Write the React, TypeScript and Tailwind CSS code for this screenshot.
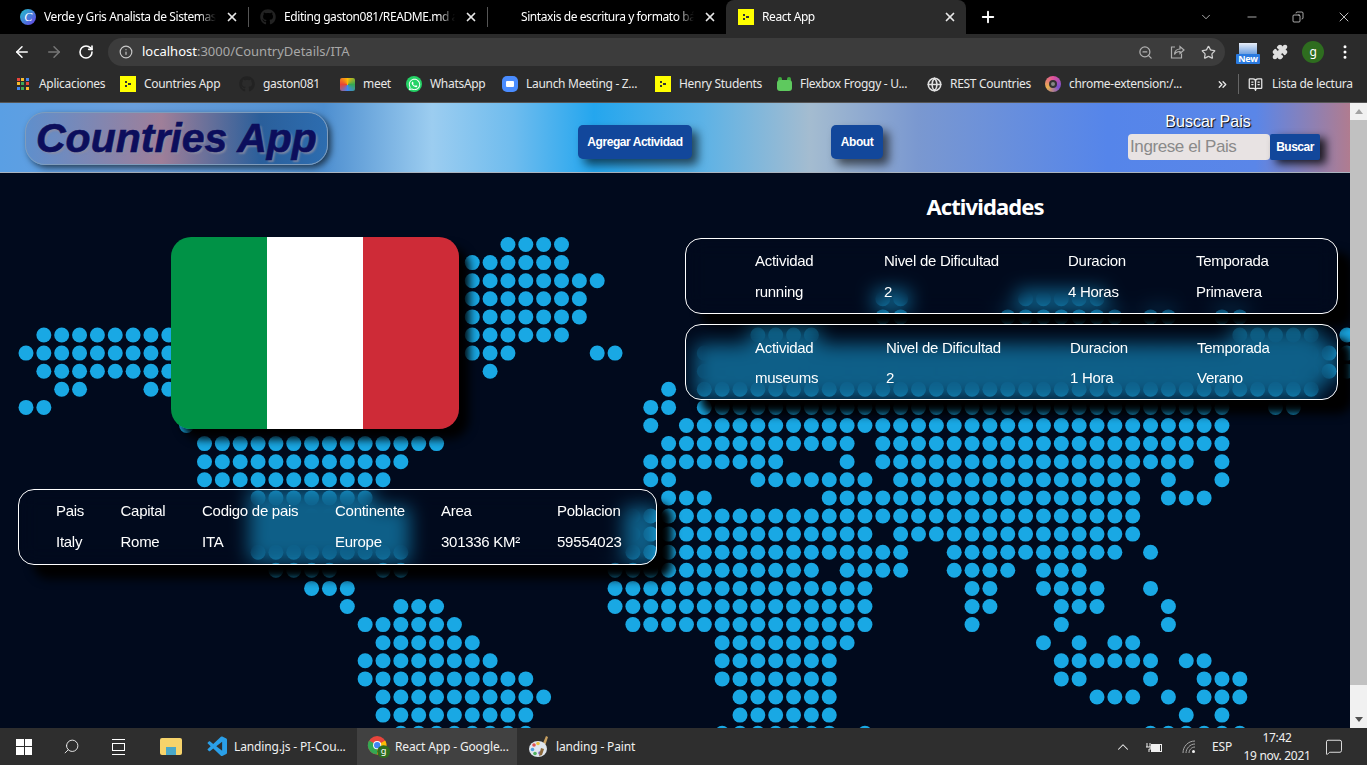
import type { ReactNode } from 'react';
import { ArrowLeft, ArrowRight, RotateCw, Info, ZoomOut, Star, Puzzle, EllipsisVertical, ChevronDown, ChevronUp, Minus, X, Plus, Search, MessageSquare, Copy, BookOpenText, ChevronsRight, Globe } from 'lucide-react';
import { FaGithub, FaWhatsapp } from 'react-icons/fa';
import { VscVscode } from 'react-icons/vsc';

// [row, [fromCol, toCol], ...] — the dots of the world map background
const DOTS: [number, ...[number, number][]][] = [
  [0, [27, 30]],
  [1, [25, 30]],
  [2, [25, 32]],
  [3, [25, 31], [48, 49], [56, 60]],
  [4, [25, 31], [48, 49], [55, 61], [63, 64], [67, 68]],
  [5, [1, 8], [25, 30], [41, 44], [68, 72], [74, 74]],
  [6, [0, 8], [25, 27], [32, 33], [38, 73], [74, 74]],
  [7, [1, 8], [26, 26], [38, 73], [74, 74]],
  [8, [2, 3], [7, 8], [36, 36], [38, 72]],
  [9, [0, 1], [35, 36], [38, 67], [70, 71]],
  [10, [9, 9], [35, 35], [37, 67]],
  [11, [10, 23], [36, 46], [48, 67]],
  [12, [10, 21], [35, 42], [46, 46], [48, 65], [67, 67]],
  [13, [10, 20], [35, 36], [41, 47], [49, 62], [64, 64], [67, 67]],
  [14, [13, 19], [36, 38], [45, 62], [64, 66]],
  [15, [13, 21], [34, 62]],
  [16, [13, 21], [34, 47], [49, 62]],
  [17, [13, 21], [34, 49], [52, 61], [63, 63]],
  [18, [14, 17], [20, 21], [33, 44], [46, 49], [52, 55], [57, 59]],
  [19, [16, 18], [33, 47], [53, 54], [57, 60], [63, 63]],
  [20, [18, 18], [21, 23], [33, 47], [53, 54], [58, 60], [64, 64]],
  [21, [19, 24], [34, 47], [53, 53], [58, 58], [64, 64]],
  [22, [20, 25], [39, 46], [57, 57], [59, 59], [61, 62]],
  [23, [19, 26], [39, 45], [58, 63], [65, 66]],
  [24, [19, 28], [39, 45], [58, 59], [63, 63], [66, 68]],
  [25, [20, 29], [40, 45], [60, 62], [64, 64], [66, 68]],
  [26, [20, 28], [40, 45], [65, 65], [67, 67]],
  [27, [21, 28], [39, 45], [47, 47], [63, 68]],
];

function DotMap() {
  const circles: ReactNode[] = [];
  for (const [row, ...ranges] of DOTS) {
    for (const [from, to] of ranges) {
      for (let c = from; c <= to; c++) {
        circles.push(<circle key={`${row}-${c}`} cx={26 + 17.85 * c} cy={71.5 + 18.1 * row} r={7.5} fill="#19a8e4" />);
      }
    }
  }
  return (
    <svg className="absolute left-0 top-0" width={1350} height={555}>
      {circles}
    </svg>
  );
}

function HenryIcon({ size = 16 }: { size?: number }) {
  return (
    <span className="flex shrink-0 items-center justify-center gap-[1px] bg-[#ffff00]" style={{ width: size, height: size }}>
      <span className="flex flex-col gap-[2px]">
        <span className="h-[2px] w-[2px] bg-[#333]" />
        <span className="h-[2px] w-[2px] bg-[#333]" />
      </span>
      <span className="h-[2px] w-[3px] bg-[#333]" />
    </span>
  );
}

function Tab({ width, icon, title, pad = 'pl-[10px]', active }: { width: string; icon?: ReactNode; title: string; pad?: string; active?: boolean }) {
  return (
    <div className={`${width} ${pad} relative flex h-full shrink-0 items-center gap-2 ${active ? 'rounded-t-lg bg-[#2b2b2b]' : ''}`}>
      {icon}
      <span className="min-w-0 flex-1 overflow-hidden whitespace-nowrap tracking-[-0.42px] text-white [mask-image:linear-gradient(to_right,black_90%,transparent)]">{title}</span>
      <X size={14} strokeWidth={3} className="ml-[1px] mr-[9px] shrink-0 text-[#e8e8e8]" />
    </div>
  );
}

function Bookmark({ icon, label, width }: { icon: ReactNode; label: string; width: string }) {
  return (
    <div className={`${width} flex shrink-0 items-center gap-2`}>
      <span className="flex w-4 shrink-0 justify-center">{icon}</span>
      <span className="whitespace-nowrap">{label}</span>
    </div>
  );
}

function AppsIcon() {
  const colors = ['#e8453c', '#f9bb2d', '#4285f4', '#f9bb2d', '#3aa757', '#e8453c', '#4285f4', '#3aa757', '#f9bb2d'];
  return (
    <span className="grid h-[13px] w-[13px] grid-cols-3 gap-[1px]">
      {colors.map((c, i) => (
        <span key={i} className="h-[3px] w-[3px]" style={{ backgroundColor: c }} />
      ))}
    </span>
  );
}

function FrogIcon() {
  return (
    <span className="relative h-[14px] w-[15px]">
      <span className="absolute left-[1px] top-0 h-[5px] w-[4px] rounded-full bg-[#3fa83f]" />
      <span className="absolute right-[1px] top-0 h-[5px] w-[4px] rounded-full bg-[#3fa83f]" />
      <span className="absolute bottom-0 left-0 h-[11px] w-[15px] rounded-[3px] bg-[#5ec95e]" />
    </span>
  );
}

function ShareIcon() {
  return (
    <svg width="16" height="16" viewBox="0 0 16 16" fill="none" stroke="#b0b0b0" strokeWidth="1.2" className="ml-[16px]">
      <path d="M6 3H2.5v11h10V9.5" />
      <path d="M5.5 10.5c0-3.5 2.5-5.5 5.5-5.5V2.5L15 6l-4 3.5V7.5c-2.5 0-4.5 1-5.5 3z" />
    </svg>
  );
}

function ChromeIcon() {
  return (
    <svg width="26" height="26" viewBox="0 0 26 26">
      <circle cx="11" cy="11" r="10" fill="#e8453c" />
      <path d="M11 11 L2.3 6 A10 10 0 0 0 11 21 Z" fill="#34a853" />
      <path d="M11 11 L19.7 6 A10 10 0 0 1 11 21 Z" fill="#fbbc05" />
      <circle cx="11" cy="11" r="4.4" fill="#fff" />
      <circle cx="11" cy="11" r="3.4" fill="#4285f4" />
      <circle cx="18" cy="18" r="7" fill="#2e6d1f" />
      <text x="18" y="21" textAnchor="middle" fontSize="10" fill="#fff" fontFamily="Noto Sans">g</text>
    </svg>
  );
}

function PaintIcon() {
  return (
    <svg width="24" height="24" viewBox="0 0 24 24">
      <path d="M18 1l2 1-4 12-3-1z" fill="#c8a060" />
      <ellipse cx="10" cy="14" rx="9" ry="8" fill="#dfe6ee" />
      <circle cx="6" cy="10" r="1.8" fill="#e05050" />
      <circle cx="10" cy="8.5" r="1.8" fill="#e8c040" />
      <circle cx="4.5" cy="14.5" r="1.8" fill="#50a0e0" />
      <circle cx="7" cy="18.5" r="1.8" fill="#50b060" />
      <circle cx="12" cy="18" r="1.8" fill="#8060c0" />
      <path d="M13 13l3 1-2 6-3 1z" fill="#8c6a3c" />
    </svg>
  );
}

function BatteryIcon() {
  return (
    <svg width="17" height="12" viewBox="0 0 17 12" fill="none" stroke="#f0f0f0" className="ml-[14px] shrink-0">
      <path d="M1 2v4M4 2v4M0 6h5v2H3v3" strokeWidth="1" />
      <rect x="5.5" y="3.5" width="10" height="7" strokeWidth="1" />
      <rect x="6" y="4" width="8" height="6" fill="#f0f0f0" stroke="none" />
    </svg>
  );
}

function WifiIcon() {
  return (
    <svg width="14" height="14" viewBox="0 0 14 14" fill="none" stroke="#a8a8a8" strokeWidth="1" className="ml-[19px] shrink-0">
      <path d="M1 13C1 6.5 6 1 13 1" />
      <path d="M4 13c0-4.5 4-9 9-9" />
      <path d="M7 13c0-3 2.5-6 6-6" />
      <circle cx="11.5" cy="11.5" r="1.5" fill="#f0f0f0" stroke="none" />
    </svg>
  );
}

function BrowserChrome() {
  return (
    <div className="h-[103px] shrink-0 bg-[#2b2b2b] font-['Noto_Sans',sans-serif] text-[12px] tracking-[-0.3px] text-white">
      <div className="flex h-[34px] items-center bg-black pl-[10px]">
        <Tab
          width="w-[238px]"
          title="Verde y Gris Analista de Sistemas"
          icon={<span className="flex h-4 w-4 shrink-0 items-center justify-center rounded-full bg-[linear-gradient(135deg,#1fc4c9,#6a3de8)] font-['Liberation_Serif',serif] text-[12px] italic">C</span>}
        />
        <span className="h-5 w-px shrink-0 bg-[#555]" />
        <Tab width="w-[238px]" pad="pl-[11px]" title="Editing gaston081/README.md a" icon={<FaGithub size={16} className="shrink-0 text-[#222]" />} />
        <span className="h-5 w-px shrink-0 bg-[#555]" />
        <Tab width="w-[238px]" pad="pl-[33px]" title="Sintaxis de escritura y formato bá" />
        <Tab width="w-[240px]" pad="pl-[12px]" title="React App" icon={<HenryIcon />} active />
        <Plus size={18} strokeWidth={2.5} className="ml-[13px] shrink-0" />
        <div className="ml-auto flex items-center text-[#f0f0f0]">
          <span className="flex w-[46px] justify-center"><ChevronDown size={14} strokeWidth={1.2} /></span>
          <span className="flex w-[46px] justify-center"><Minus size={14} strokeWidth={1.2} /></span>
          <span className="flex w-[46px] justify-center"><Copy size={12} strokeWidth={1.4} className="-scale-x-100" /></span>
          <span className="flex w-[46px] justify-center"><X size={16} strokeWidth={1.2} /></span>
        </div>
      </div>
      <div className="flex h-[36px] items-center pl-[13px]">
        <ArrowLeft size={18} strokeWidth={2} className="shrink-0" />
        <ArrowRight size={18} strokeWidth={2} className="ml-[14px] shrink-0 text-[#777]" />
        <RotateCw size={16} strokeWidth={2.4} className="ml-[15px] shrink-0" />
        <div className="ml-[14px] flex h-[28px] w-[1117px] items-center rounded-full bg-[#3c3c3c] pl-[11px] pr-[9px] text-[13px] tracking-normal text-[#a8a8a8]">
          <Info size={14} className="shrink-0 text-[#c8c8c8]" />
          <span className="ml-[9px]"><span className="text-white">localhost</span>:3000/CountryDetails/ITA</span>
          <ZoomOut size={15} className="ml-auto text-[#b0b0b0]" />
          <ShareIcon />
          <Star size={15} className="ml-[16px] text-[#d0d0d0]" />
        </div>
        <div className="ml-[11px] flex h-[24px] w-[24px] shrink-0 flex-col items-center justify-end">
          <span className="h-[11px] w-[18px] bg-[linear-gradient(#e8eef8,#6fa0e0)]" />
          <span className="h-[10px] w-[24px] rounded-[1px] bg-[#2a7ae0] text-center text-[9px] font-bold leading-[10px]">New</span>
        </div>
        <Puzzle size={16} fill="#e0e0e0" className="ml-[12px] shrink-0 text-[#e0e0e0]" />
        <span className="ml-[14px] flex h-[22px] w-[22px] shrink-0 items-center justify-center rounded-full bg-[#2e6d1f] text-[12px]">g</span>
        <EllipsisVertical size={18} className="ml-[12px] shrink-0" />
      </div>
      <div className="flex h-[33px] items-center border-b border-[#555] pb-[4px] pl-[15px] text-[#e8e8e8]">
        <Bookmark width="w-[105px]" label="Aplicaciones" icon={<AppsIcon />} />
        <Bookmark width="w-[119px]" label="Countries App" icon={<HenryIcon />} />
        <Bookmark width="w-[100px]" label="gaston081" icon={<FaGithub size={16} className="text-[#222]" />} />
        <Bookmark width="w-[67px]" label="meet" icon={<span className="h-[13px] w-[15px] rounded-[2px] bg-[conic-gradient(#fbbc05,#34a853,#4285f4,#ea4335,#fbbc05)]" />} />
        <Bookmark width="w-[96px]" label="WhatsApp" icon={<span className="flex h-4 w-4 items-center justify-center rounded-full bg-[#25d366]"><FaWhatsapp size={13} className="text-white" /></span>} />
        <Bookmark width="w-[153px]" label="Launch Meeting - Z..." icon={<span className="flex h-4 w-4 items-center justify-center rounded-[5px] bg-[#4a8cff]"><span className="h-[6px] w-[8px] rounded-[1px] bg-white" /></span>} />
        <Bookmark width="w-[121px]" label="Henry Students" icon={<HenryIcon />} />
        <Bookmark width="w-[150px]" label="Flexbox Froggy - U..." icon={<FrogIcon />} />
        <Bookmark width="w-[119px]" label="REST Countries" icon={<Globe size={15} strokeWidth={2.5} className="text-[#e0e0e0]" />} />
        <Bookmark width="w-[171px]" label="chrome-extension:/..." icon={<span className="flex h-4 w-4 items-center justify-center rounded-full bg-[conic-gradient(#e0509a,#7a50d0,#e8b050,#e0509a)]"><span className="h-2 w-2 rounded-full border-2 border-[#333] bg-[#888]" /></span>} />
        <ChevronsRight size={13} strokeWidth={2.5} className="mr-[9px] shrink-0" />
        <span className="mr-[9px] h-5 w-px shrink-0 bg-[#666]" />
        <BookOpenText size={15} className="mr-[9px] shrink-0" />
        <span className="whitespace-nowrap">Lista de lectura</span>
      </div>
    </div>
  );
}

function NavBar() {
  return (
    <div className="flex h-[70px] shrink-0 items-center border-b border-[#aab4c0] bg-[linear-gradient(90deg,#5a9fe4_0%,#6a9fdc_10%,#4e8fd0_24%,#9ccdf0_32%,#6fbcee_38%,#24a6ee_44%,#5cb2e6_52%,#a4bcd0_60%,#7a98d0_68%,#5585ea_82%,#5a86e8_93%,#b07c90_100%)] pl-[25px] font-['Liberation_Sans',sans-serif]">
      <div className="mt-[1px] flex h-[53px] w-[303px] shrink-0 items-center rounded-[20px] border border-[#7f9cbc] bg-[linear-gradient(90deg,#5f8fcc_0%,#9f7f99_45%,#2a5f9b_78%,#2d6db0_100%)] pl-[10px] shadow-[3px_3px_6px_rgba(0,0,0,0.6)]">
        <span className="whitespace-nowrap text-[41px] font-bold italic leading-none text-[#0c0e5c] [-webkit-text-stroke:0.6px_#0c0e5c] [text-shadow:2px_2px_2px_rgba(140,140,160,0.8)]">Countries App</span>
      </div>
      <button type="button" className="ml-[250px] mt-[8px] h-[34px] w-[114px] shrink-0 rounded-[5px] bg-[#12479b] text-[12px] font-bold tracking-[-0.45px] text-white shadow-[6px_6px_10px_rgba(0,0,0,0.6)]">
        Agregar Actividad
      </button>
      <button type="button" className="ml-[139px] mt-[8px] h-[34px] w-[52px] shrink-0 rounded-[5px] bg-[#12479b] text-[12px] font-bold tracking-[-0.45px] text-white shadow-[6px_6px_10px_rgba(0,0,0,0.6)]">
        About
      </button>
      <div className="ml-[245px] flex w-[192px] shrink-0 flex-col pb-[3px]">
        <span className="mb-[3px] w-[160px] text-center text-[16px] leading-[18px] text-white [text-shadow:1px_1px_1px_#000]">Buscar Pais</span>
        <div className="flex h-[26px]">
          <input readOnly placeholder="Ingrese el Pais" className="h-full w-[142px] rounded-[4px] bg-[#e8e3e3] pl-[2px] text-[17px] tracking-[-0.4px] placeholder:text-[#8a8a8a]" />
          <button type="button" className="h-full w-[50px] rounded-[2px] bg-[#12479b] text-[12px] font-bold tracking-[-0.5px] text-white shadow-[6px_4px_8px_rgba(0,0,0,0.8)]">Buscar</button>
        </div>
      </div>
    </div>
  );
}

function InfoCard({ cols, rows, className, rowH = 'h-[31px]' }: { cols: string; rows: string[][]; className: string; rowH?: string }) {
  return (
    <div className={`${className} rounded-[16px] border border-white shadow-[15px_14px_10px_#000] backdrop-blur-[10px]`}>
      {rows.map((row, r) => (
        <div key={r} className={`grid ${cols} ${rowH} items-center`}>
          {row.map((cell) => (
            <span key={cell} className="whitespace-nowrap">{cell}</span>
          ))}
        </div>
      ))}
    </div>
  );
}

function Page() {
  return (
    <div className="relative min-h-0 flex-1 overflow-hidden bg-[#010a1d] font-['Liberation_Sans',sans-serif] text-[15px] tracking-[-0.27px] text-white">
      <DotMap />
      <div className="relative flex items-start">
        <div className="w-[667px] shrink-0 pl-[18px] pt-[64px]">
          <div className="ml-[153px] flex h-[192px] w-[288px] overflow-hidden rounded-[20px] shadow-[10px_10px_10px_#000]">
            <span className="w-1/3 bg-[#009246]" />
            <span className="w-1/3 bg-white" />
            <span className="w-1/3 bg-[#ce2b37]" />
          </div>
          <InfoCard
            className="mt-[60px] h-[76px] w-[639px] pl-[37px] pt-[6px]"
            cols="grid-cols-[64.5px_81.5px_133px_106px_116px_1fr]"
            rows={[
              ['Pais', 'Capital', 'Codigo de pais', 'Continente', 'Area', 'Poblacion'],
              ['Italy', 'Rome', 'ITA', 'Europe', '301336 KM²', '59554023'],
            ]}
          />
        </div>
        <div className="ml-[18px] w-[653px] shrink-0 pt-[17px]">
          <h2 className="mb-[16px] w-[600px] text-center font-['Noto_Sans',sans-serif] text-[22px] font-bold leading-[32px] tracking-[-0.9px]">Actividades</h2>
          <InfoCard
            className="h-[76px] pl-[69px] pt-[7px]"
            cols="grid-cols-[129px_184px_128px_1fr]"
            rows={[
              ['Actividad', 'Nivel de Dificultad', 'Duracion', 'Temporada'],
              ['running', '2', '4 Horas', 'Primavera'],
            ]}
          />
          <InfoCard
            className="mt-[10px] h-[76px] pl-[69px] pt-[8px]"
            rowH="h-[30px]"
            cols="grid-cols-[131px_184px_127px_1fr]"
            rows={[
              ['Actividad', 'Nivel de Dificultad', 'Duracion', 'Temporada'],
              ['museums', '2', '1 Hora', 'Verano'],
            ]}
          />
        </div>
      </div>
    </div>
  );
}

function Scrollbar() {
  return (
    <div className="flex w-[17px] shrink-0 flex-col items-center bg-[#f1f1f1]">
      <span className="mt-[6px] h-0 w-0 border-x-[4px] border-b-[5px] border-x-transparent border-b-[#a3a3a3]" />
      <span className="mt-[6px] h-[565px] w-full bg-[#c1c1c1]" />
      <span className="mt-[32px] h-0 w-0 border-x-[4px] border-t-[5px] border-x-transparent border-t-[#505050]" />
    </div>
  );
}

function TaskItem({ icon, label, width, pad, active }: { icon: ReactNode; label: string; width: string; pad: string; active?: boolean }) {
  return (
    <div className={`${width} ${pad} flex h-full shrink-0 items-center gap-[4px] ${active ? 'bg-[#414141]' : ''}`}>
      <span className="flex w-6 shrink-0 justify-center">{icon}</span>
      <span className="whitespace-nowrap">{label}</span>
    </div>
  );
}

function TaskBar() {
  return (
    <div className="flex h-[37px] shrink-0 items-center bg-[#2e2e2e] pl-[16px] font-['Noto_Sans',sans-serif] text-[12px] tracking-[-0.15px] text-[#f0f0f0]">
      <span className="grid h-4 w-4 shrink-0 grid-cols-2 gap-[1px]">
        <span className="bg-white" />
        <span className="bg-white" />
        <span className="bg-white" />
        <span className="bg-white" />
      </span>
      <Search size={17} strokeWidth={1.3} className="ml-[31px] shrink-0 -scale-x-100" />
      <span className="ml-[32px] flex h-4 w-4 shrink-0 flex-col justify-between">
        <span className="h-px w-[13px] bg-white" />
        <span className="h-[8px] w-[13px] border border-white" />
        <span className="h-px w-[13px] bg-white" />
      </span>
      <span className="ml-[32px] flex h-[17px] w-[22px] shrink-0 items-end justify-center rounded-[2px] bg-[#f6d36b]">
        <span className="h-[8px] w-[10px] bg-[#4aa8c8]" />
      </span>
      <div className="ml-[20px] flex h-full">
        <TaskItem width="w-[155px]" pad="pl-[4px]" label="Landing.js - PI-Cou..." icon={<VscVscode size={26} className="text-[#2a9fe8]" />} />
        <TaskItem width="w-[160px]" pad="pl-[10px]" label="React App - Google..." icon={<ChromeIcon />} active />
        <TaskItem width="w-[130px]" pad="pl-[11px]" label="landing - Paint" icon={<PaintIcon />} />
      </div>
      <div className="ml-auto flex h-full items-center">
        <ChevronUp size={18} strokeWidth={1.4} className="shrink-0" />
        <BatteryIcon />
        <WifiIcon />
        <span className="ml-[16px] w-[24px] shrink-0">ESP</span>
        <div className="flex w-[82px] shrink-0 flex-col items-center leading-[18px] tracking-[-0.3px]">
          <span>17:42</span>
          <span>19 nov. 2021</span>
        </div>
        <MessageSquare size={18} strokeWidth={1.2} className="ml-[7px] mr-[24px] shrink-0" />
      </div>
    </div>
  );
}

export default function App() {
  return (
    <div className="flex h-screen w-full flex-col overflow-hidden bg-black">
      <BrowserChrome />
      <div className="flex min-h-0 flex-1">
        <div className="flex min-w-0 flex-1 flex-col">
          <NavBar />
          <Page />
        </div>
        <Scrollbar />
      </div>
      <TaskBar />
    </div>
  );
}
